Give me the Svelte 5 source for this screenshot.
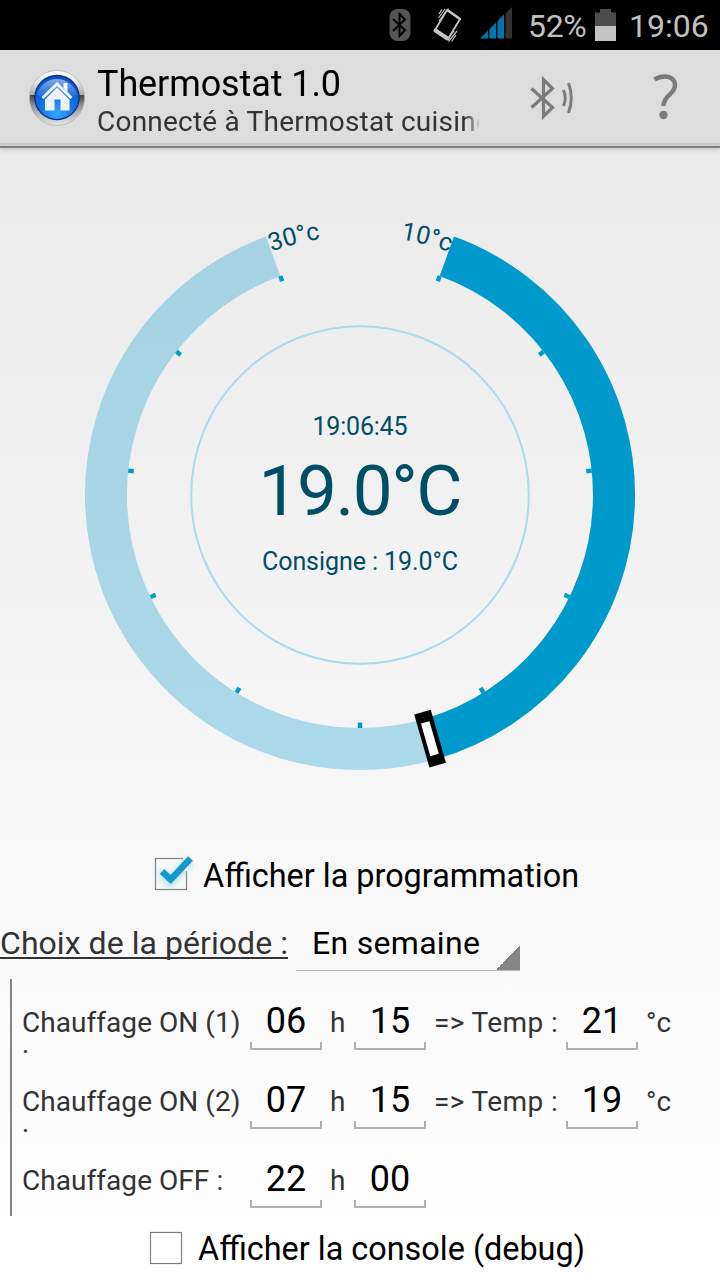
<script>
  let time = '19:06:45';
  let temperature = 19;
  let setpoint = 19;
  let showProgram = true;
  let showConsole = false;

  const min = 10;
  const max = 30;

  let slots = [
    { label: 'Chauffage ON (1) :', hour: '06', minute: '15', temp: '21' },
    { label: 'Chauffage ON (2) :', hour: '07', minute: '15', temp: '19' },
    { label: 'Chauffage OFF :', hour: '22', minute: '00', temp: null },
  ];

  // The dial goes clockwise from 20deg to 340deg
  function toAngle(value) {
    return 20 + ((value - min) / (max - min)) * 320;
  }

  function arc(r, from, to) {
    const a = (from * Math.PI) / 180;
    const b = (to * Math.PI) / 180;
    const large = to - from > 180 ? 1 : 0;
    return `M ${r * Math.sin(a)} ${-r * Math.cos(a)} A ${r} ${r} 0 ${large} 1 ${r * Math.sin(b)} ${-r * Math.cos(b)}`;
  }

  const ticks = [];
  for (let v = min; v <= max; v += 2) ticks.push(toAngle(v));

  $: handle = toAngle(setpoint);
</script>

<div class="screen">
  <div class="status">
    <svg class="bt" width="22" height="34" viewBox="0 0 22 34">
      <rect x="0.5" y="1" width="21" height="32" rx="8" fill="#555" />
      <path d="M4 11 L16 22 L10.5 28 V6 L16 11.5 L4 23" fill="none" stroke="#000" stroke-width="2" />
    </svg>
    <svg class="vibrate" width="30" height="36" viewBox="0 0 30 36">
      <g fill="none" stroke="#c4c4c4">
        <path d="M14 3 L27 12 L15 32 L2 23 Z" stroke-width="1.8" stroke-linejoin="round" />
        <path d="M2.5 23.5 L14.5 31.5" stroke-width="4" stroke-linecap="round" />
        <path d="M15 3.5 L27 12" stroke-width="2.4" stroke-linecap="round" />
        <path d="M12 2 L5.5 11 M9 2.5 L6 7 M15.5 1.5 L6 14 M24 24 L15.5 34.5 M23 28 L18.5 34.5 M21 24 L15.5 31" stroke-width="1.2" />
      </g>
    </svg>
    <svg class="signal" width="33" height="32" viewBox="0 0 33 32">
      <path d="M0 31.5 L8 23.5 V31.5 Z M9.5 22 L16 15.5 V31.5 H9.5 Z M17.5 14 L24 7.5 V31.5 H17.5 Z" fill="#0077ae" />
      <path d="M25.5 6.5 L32 0 V31.5 H25.5 Z" fill="#333" />
    </svg>
    <span class="percent">52%</span>
    <svg class="battery" width="21" height="32" viewBox="0 0 21 32">
      <path d="M5 0 H16 V3.5 H21 V17 H0 V3.5 H5 Z" fill="#4d4d4d" />
      <path d="M0 17 H21 V32 H0 Z" fill="#c4c4c4" />
    </svg>
    <span class="clock">19:06</span>
  </div>

  <header>
    <svg class="logo" width="58" height="58" viewBox="0 0 58 58">
      <defs>
        <linearGradient id="rim" x1="0" y1="0" x2="0" y2="1">
          <stop offset="0" stop-color="#fff" />
          <stop offset="0.25" stop-color="#ddd" />
          <stop offset="0.44" stop-color="#aaa" />
          <stop offset="0.45" stop-color="#444" />
          <stop offset="0.65" stop-color="#909797" />
          <stop offset="1" stop-color="#e6e6e6" />
        </linearGradient>
        <radialGradient id="glass" cx="0.5" cy="0.88" r="0.85">
          <stop offset="0" stop-color="#35a5ff" />
          <stop offset="0.45" stop-color="#1475e8" />
          <stop offset="1" stop-color="#0a50c4" />
        </radialGradient>
        <linearGradient id="shine" x1="0" y1="0" x2="0" y2="1">
          <stop offset="0" stop-color="#fff" stop-opacity="0.5" />
          <stop offset="1" stop-color="#fff" stop-opacity="0" />
        </linearGradient>
      </defs>
      <circle cx="29" cy="29" r="27.5" fill="url(#rim)" stroke="#aaa" stroke-width="0.7" />
      <circle cx="29" cy="28.5" r="22.8" fill="#0b2d80" />
      <circle cx="29" cy="28.5" r="21.5" fill="url(#glass)" />
      <path d="M9 26 A20.5 20.5 0 0 1 49 26 Q29 32 9 26 Z" fill="url(#shine)" />
      <path d="M13.5 28 L29 13 L44.5 28 L42.5 30 L29 17 L15.5 30 Z" fill="#f4f6fb" />
      <path d="M35.5 14 H39.5 V23 L35.5 19 Z" fill="#f4f6fb" />
      <path d="M29 18.5 L41.5 30.5 V41.5 H32.5 V30.5 H26.5 V41.5 H17 V30.5 Z" fill="#edf1f8" />
    </svg>
    <div class="titles">
      <div class="title">Thermostat 1.0</div>
      <div class="subtitle">Connecté à Thermostat cuisine</div>
    </div>
    <svg class="connect" width="46" height="48" viewBox="0 0 46 48">
      <g fill="none" stroke="#7b7b7b">
        <path d="M1.5 14.5 L22.5 33.5 L13.5 42.5 V5.5 L22.5 14.5 L1.5 33.5" stroke-width="3.2" />
        <path d="M33.5 16 Q37 24 33.5 32 M38.5 9 Q44 24 38.5 39" stroke-width="3" />
      </g>
    </svg>
    <svg class="help" width="26" height="48" viewBox="0 0 26 48">
      <path d="M1.5 6.5 Q6 3.5 12 3.5 C18 3.5 22 7 22 12.5 C22 21 10.5 22 10.5 33" fill="none" stroke="#7b7b7b" stroke-width="4.4" />
      <circle cx="10.5" cy="42" r="4.2" fill="#7b7b7b" />
    </svg>
  </header>

  <main>
    <svg class="dial" width="720" height="692" viewBox="-360 -347 720 692">
      <path d={arc(254, 20, 340)} class="track" />
      <path d={arc(254, 20, handle)} class="value" />
      {#each ticks as tick}
        <rect x="-2.2" y="-233" width="4.4" height="5.5" fill="#0099cc" transform="rotate({tick})" />
      {/each}
      <g transform="rotate({handle})">
        <rect x="-8.8" y="-281" width="17.2" height="55" fill="#000" />
        <rect x="-4.4" y="-270.5" width="8.8" height="34" fill="#fff" />
      </g>
      <path id="maxPath" d={arc(259, 339.7, 360)} fill="none" />
      <path id="minPath" d={arc(259, 0, 20.2)} fill="none" />
      <text class="bound"><textPath href="#maxPath" startOffset="1.5">{max}°c</textPath></text>
      <text class="bound" text-anchor="end"><textPath href="#minPath" startOffset="100%">{min}°c</textPath></text>
      <circle r="168.8" fill="none" stroke="#addaea" stroke-width="2" />
      <text class="small" y="-60" textLength="95">{time}</text>
      <text class="big" x="0.5" y="20" textLength="204">{temperature.toFixed(1)}°C</text>
      <text class="small" y="75" textLength="196">Consigne : {setpoint.toFixed(1)}°C</text>
    </svg>

    <label class="check program">
      <input type="checkbox" bind:checked={showProgram} />
      <svg width="44" height="44" viewBox="0 0 44 44">
        <defs>
          <filter id="glow" x="-50%" y="-50%" width="200%" height="200%">
            <feGaussianBlur stdDeviation="3" />
          </filter>
        </defs>
        <rect x="5.5" y="5.5" width="31" height="31" fill="none" stroke="#808080" stroke-width="1.2" />
        {#if showProgram}
          <path d="M11 19 L20.5 29 L40 7" fill="none" stroke="#8bd7f2" stroke-width="8" opacity="0.7" filter="url(#glow)" />
          <path d="M33 5.5 H36.5 V18" fill="none" stroke="#f5fafb" stroke-width="3" />
          <path d="M12 18.5 L20.7 26.5 L40.5 5.5" fill="none" stroke="#1499ca" stroke-width="6.5" />
        {/if}
      </svg>
      <span>Afficher la programmation</span>
    </label>

    <div class="period">
      <span class="period-label">Choix de la période :</span>
      <button class="spinner">En semaine</button>
    </div>

    <div class="slots">
      {#each slots as slot}
        <div class="slot">
          <span class="name">{slot.label}</span>
          <input type="text" bind:value={slot.hour} />
          <span class="h">h</span>
          <input type="text" bind:value={slot.minute} />
          {#if slot.temp}
            <span class="arrow">=&gt; Temp :</span>
            <input type="text" bind:value={slot.temp} />
            <span class="unit">°c</span>
          {/if}
        </div>
      {/each}
    </div>

    <label class="check console">
      <input type="checkbox" bind:checked={showConsole} />
      <svg width="44" height="44" viewBox="0 0 44 44">
        <rect x="5.5" y="6.5" width="31" height="31" fill="none" stroke="#808080" stroke-width="1.2" />
      </svg>
      <span>Afficher la console (debug)</span>
    </label>
  </main>
</div>

<style>
  :global(body) {
    margin: 0;
  }

  .screen {
    width: 720px;
    height: 1280px;
    overflow: hidden;
    display: flex;
    flex-direction: column;
    background: linear-gradient(#e8e8e8, #fff);
    font-family: Roboto, "Liberation Sans", sans-serif;
    color: #333;
  }

  .status {
    height: 50px;
    box-sizing: border-box;
    padding-left: 388px;
    display: flex;
    align-items: center;
    background: #000;
    color: #c0c0c0;
    font-size: 32px;
    white-space: nowrap;
  }

  .bt {
    margin-left: 1px;
  }

  .vibrate {
    margin-left: 22px;
  }

  .signal {
    margin: -5px 0 0 17px;
  }

  .percent {
    width: 59px;
    margin: 2px 0 0 15px;
    letter-spacing: -0.3px;
  }

  .battery {
    margin: -1px 0 0 8px;
  }

  .clock {
    margin: 2px 0 0 13px;
  }

  header {
    height: 98px;
    box-sizing: border-box;
    padding-left: 28px;
    display: flex;
    background: #ddd;
    border-bottom: 2px solid #808080;
    box-shadow: inset 0 -3px 0 #cecece, 0 1px 5px rgba(0, 0, 0, 0.2);
    white-space: nowrap;
  }

  .logo {
    margin-top: 19px;
  }

  .titles {
    width: 382px;
    margin-left: 11px;
    overflow: hidden;
    -webkit-mask-image: linear-gradient(to right, #000 368px, transparent 384px);
    mask-image: linear-gradient(to right, #000 368px, transparent 384px);
  }

  .title {
    margin-top: 13px;
    font-size: 36px;
    line-height: 42px;
    letter-spacing: -0.1px;
    color: #000;
  }

  .subtitle {
    font-size: 28px;
    line-height: 33px;
    letter-spacing: 0.22px;
  }

  .connect {
    margin: 24px 0 0 51px;
  }

  .help {
    margin: 23px 0 0 77px;
  }

  main {
    display: flex;
    flex-direction: column;
  }

  .dial {
    display: block;
  }

  .track,
  .value {
    fill: none;
    stroke: rgba(0, 153, 204, 0.3);
    stroke-width: 42px;
  }

  .value {
    stroke: #0099cc;
  }

  text {
    fill: #004d66;
  }

  .bound {
    font-size: 25px;
  }

  .small {
    font-size: 25px;
    text-anchor: middle;
  }

  .big {
    font-size: 71px;
    text-anchor: middle;
  }

  .check {
    display: flex;
    align-items: center;
    font-size: 32px;
    color: #000;
    white-space: nowrap;
  }

  .check input {
    display: none;
  }

  .program {
    height: 70px;
    padding-left: 150px;
  }

  .check span {
    margin: 2px 0 0 9px;
    font-size: 32.4px;
  }

  .console {
    height: 64px;
    padding-left: 145px;
  }

  .period {
    height: 69px;
    display: flex;
    font-size: 32px;
    white-space: nowrap;
  }

  .period-label {
    width: 288px;
    height: 46px;
    line-height: 66px;
    letter-spacing: 0.05px;
    text-decoration: underline;
    text-decoration-thickness: 2px;
    text-underline-offset: 3px;
    text-decoration-skip-ink: none;
  }

  .spinner {
    width: 224px;
    height: 61px;
    margin-left: 8px;
    padding: 5px 0 0 16px;
    border: none;
    border-bottom: 1px solid #b4b4b4;
    background: linear-gradient(135deg, transparent 50%, #858585 50%) right bottom / 24px 24px no-repeat;
    font: inherit;
    letter-spacing: 0.3px;
    text-align: left;
    color: #000;
  }

  .slots {
    margin-left: 10px;
    border-left: 2px solid #858585;
  }

  .slot {
    height: 79px;
    display: flex;
    padding-left: 10px;
    font-size: 28px;
  }

  .name {
    width: 228px;
    height: 47px;
    margin-top: 27px;
    line-height: 33px;
    letter-spacing: 0.05px;
    overflow: hidden;
  }

  .slot input {
    width: 72px;
    height: 71px;
    box-sizing: border-box;
    padding: 12px 0 0;
    border: none;
    background:
      linear-gradient(#b0b0b0, #b0b0b0) left bottom / 2px 8px no-repeat,
      linear-gradient(#b0b0b0, #b0b0b0) right bottom / 2px 8px no-repeat,
      linear-gradient(#b0b0b0, #b0b0b0) left bottom / 100% 2px no-repeat;
    font: inherit;
    font-size: 36px;
    text-align: center;
    color: #000;
  }

  .h,
  .arrow,
  .unit {
    margin-top: 27px;
    line-height: 33px;
    white-space: nowrap;
  }

  .h {
    width: 24px;
    padding-left: 8px;
  }

  .arrow {
    width: 132px;
    padding-left: 8px;
    letter-spacing: 0.4px;
  }

  .unit {
    padding-left: 8px;
  }
</style>
